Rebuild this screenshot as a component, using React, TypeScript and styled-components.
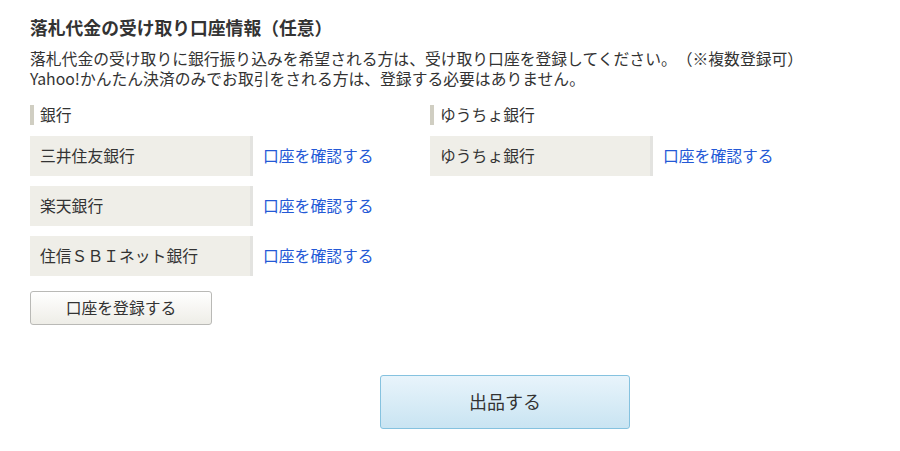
import React from 'react'
import styled, { createGlobalStyle } from 'styled-components';

const GlobalStyle = createGlobalStyle`
  body {
    margin: 0;
    background: #fff;
    color: #333;
    font-family: "Noto Sans CJK JP", "Noto Sans", sans-serif;
    text-spacing-trim: space-all;
  }
`;

const banks = ['三井住友銀行', '楽天銀行', '住信ＳＢＩネット銀行'];
const yuchoBanks = ['ゆうちょ銀行'];

const AccountList = (props: { label: string; items: string[] }): JSX.Element => (
  <Column>
    <Label>{props.label}</Label>
    <Rows>
      {props.items.map((name) => (
        <Row key={name}>
          <BankName>{name}</BankName>
          <Link href="#">口座を確認する</Link>
        </Row>
      ))}
    </Rows>
  </Column>
);

export default function App(): JSX.Element {
  return <Page>
    <GlobalStyle />
    <Title>落札代金の受け取り口座情報（任意）</Title>
    <Description>
      <Line>落札代金の受け取りに銀行振り込みを希望される方は、受け取り口座を登録してください。（※複数登録可）</Line>
      <Line>Yahoo!かんたん決済のみでお取引をされる方は、登録する必要はありません。</Line>
    </Description>
    <Columns>
      <AccountList label="銀行" items={banks} />
      <AccountList label="ゆうちょ銀行" items={yuchoBanks} />
    </Columns>
    <RegisterButton type="button">口座を登録する</RegisterButton>
    <SubmitArea>
      <SubmitButton type="button">出品する</SubmitButton>
    </SubmitArea>
  </Page>;
}

const Page = styled.div`
  padding: 16px 30px 0;
`;

const Title = styled.h2`
  margin: 0;
  font-size: 17.8px;
  line-height: 22px;
  font-weight: bold;
  color: #333;
`;

const Description = styled.div`
  margin: 11px 0 0;
  font-size: 15.8px;
`;

const Line = styled.p`
  margin: 0;
  height: 20px;
  line-height: 19px;
  white-space: nowrap;
`;

const Columns = styled.div`
  display: flex;
  margin-top: 16px;
`;

const Column = styled.div`
  width: 400px;
`;

const Label = styled.div`
  height: 20px;
  padding-left: 6px;
  border-left: 4px solid #d0cec2;
  font-size: 15.8px;
  line-height: 19px;
`;

const Rows = styled.div`
  display: flex;
  flex-direction: column;
  gap: 10px;
  margin-top: 11px;
`;

const Row = styled.div`
  display: flex;
  align-items: center;
  height: 40px;
  font-size: 15.8px;
`;

const BankName = styled.div`
  box-sizing: border-box;
  display: flex;
  align-items: center;
  width: 223px;
  height: 100%;
  padding: 0 0 2px 10px;
  background: #efeee8;
  border-right: 3px solid #e3e3e0;
`;

const Link = styled.a`
  margin: 0 0 2px 10px;
  color: #2459d6;
  text-decoration: none;
`;

const RegisterButton = styled.button`
  display: block;
  margin-top: 15px;
  width: 182px;
  height: 34px;
  padding: 0 0 2px;
  border: 1px solid #b9b9b6;
  border-radius: 3px;
  background: linear-gradient(#ffffff, #eeede7);
  color: #333;
  font-family: inherit;
  font-size: 15.8px;
  cursor: pointer;
`;

const SubmitArea = styled.div`
  margin-top: 50px;
  padding-left: 350px;
`;

const SubmitButton = styled.button`
  width: 250px;
  height: 54px;
  padding: 0 0 3px;
  border: 1px solid #85c2df;
  border-radius: 3px;
  background: linear-gradient(#e8f4fb, #c9e4f2);
  color: #333;
  font-family: inherit;
  font-size: 18px;
  cursor: pointer;
`;
